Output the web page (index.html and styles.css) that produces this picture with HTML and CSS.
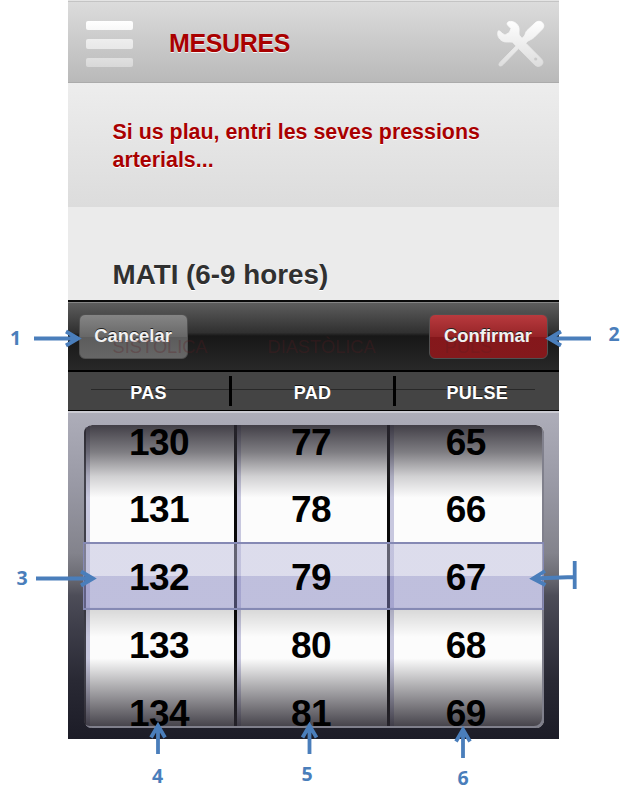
FILE: index.html
```html
<!DOCTYPE html>
<html lang="ca">
<head>
<meta charset="utf-8">
<title>Mesures</title>
<link rel="stylesheet" href="styles.css">
</head>
<body>
<main class="phone">
  <header class="topbar">
    <div class="menu"><span class="bar bar-a"></span><span class="bar bar-b"></span><span class="bar bar-c"></span></div>
    <h1 class="title">MESURES</h1>
    <svg class="tools" width="48" height="48" viewBox="0 0 48 48">
      <defs><linearGradient id="metal" x1="0" y1="0" x2="0" y2="48" gradientUnits="userSpaceOnUse"><stop offset="0" stop-color="#fff"/><stop offset="1" stop-color="#dcdcdc"/></linearGradient></defs>
      <path fill="url(#metal)" stroke="url(#metal)" stroke-width=".8" stroke-linejoin="round" d="M38 3 C40 .8 43.500 .8 45.500 2.800 C47.300 4.600 47.300 7 45.500 9 L37 17.500 C35 19.500 32 20 30.200 21.800 L28.800 23.200 L44 38.500 C46.500 41 46.400 43.500 44.500 45.300 C42.500 47 39.500 46.800 37.500 44.700 L21.600 28.600 L6.200 44.500 C4.800 46 3 46.500 2.300 45.700 C1.500 45 2 43.300 3.300 42 L19 25.900 L15.500 22.200 C12 21.700 8.500 22.800 5.200 21 C1.300 18.800 -.2 14.500 1.200 11 C2.300 10.300 3.500 11.500 5 13.200 L8 15 L12.300 12.500 L14 8.600 L11 5.500 C9.500 4 10 2.500 12 1.600 C16.500 .6 20.500 3.500 21.800 7.200 C22.500 9.500 21.700 12.500 22.200 15 L25 18.300 L27.300 16 C28.500 14 28.500 12 30 10.500 Z"/>
      <circle cx="38.700" cy="39" r="1.600" fill="#c9c9c9"/>
    </svg>
  </header>
  <section class="intro"><p class="intro-text">Si us plau, entri les seves pressions arterials...</p></section>
  <section class="period"><h2 class="period-title">MATI (6-9 hores)</h2></section>
  <div class="actions">
    <div class="ghosts"><span class="ghost">SISTÒLICA</span><span class="ghost">DIASTÒLICA</span><span class="ghost">PULS</span></div>
    <button class="btn cancel">Cancelar</button>
    <button class="btn confirm">Confirmar</button>
  </div>
  <div class="heads">
    <span class="head">PAS</span><span class="head">PAD</span><span class="head">PULSE</span>
  </div>
  <div class="picker">
    <div class="wheels">
      <div class="wheel"><span>130</span><span>131</span><span>132</span><span>133</span><span>134</span></div>
      <div class="wheel"><span>77</span><span>78</span><span>79</span><span>80</span><span>81</span></div>
      <div class="wheel"><span>65</span><span>66</span><span>67</span><span>68</span><span>69</span></div>
      <div class="shade"></div>
    </div>
    <div class="selection"></div>
  </div>
</main>
<svg class="notes" width="632" height="798" viewBox="0 0 632 798">
  <g class="arrow">
    <path d="M34 338.500H78M66 331.500L78 338.500L66 345.500"/>
    <path d="M591 338.500H549M561 331.500L549 338.500L561 345.500"/>
    <path d="M36 578.500H93M81 571.500L93 578.500L81 585.500"/>
    <path d="M574.500 577L533 578.500M545 571L533 578.500L545.500 585M574.700 561V589"/>
    <path d="M158 754V726M151 737.500L158 725.500L165 737.500"/>
    <path d="M309.500 754V726M302.500 737.500L309.500 725.500L316.500 737.500"/>
    <path d="M463 758V730M456 741.500L463 729.500L470 741.500"/>
  </g>
  <g class="num">
    <text x="15.500" y="345">1</text>
    <text x="614" y="341">2</text>
    <text x="22" y="584.500">3</text>
    <text x="157.500" y="783">4</text>
    <text x="307" y="780.500">5</text>
    <text x="463" y="784.500">6</text>
  </g>
</svg>
</body>
</html>
```
FILE: styles.css
```css
* { box-sizing: border-box; }
body {
  margin: 0;
  width: 632px;
  height: 798px;
  background: #fff;
  font-family: "Liberation Sans", Arial, sans-serif;
  font-weight: bold;
  overflow: hidden;
}
h1, h2, p { margin: 0; }
.phone { width: 490.5px; height: 739px; margin-left: 68px; }

.topbar {
  height: 83px;
  display: flex;
  align-items: flex-start;
  padding: 19px 14px 0 18px;
  background: linear-gradient(#dcdcdc, #b9b9b9);
  border-top: 1px solid #e4e4e4;
  border-bottom: 1px solid #ababab;
  box-shadow: inset 0 1px #c4c4c4;
}
.menu { width: 47px; display: grid; gap: 9px; margin-top: .5px; }
.bar { height: 9.5px; border-radius: 2px; }
.bar-a { background: linear-gradient(#fff, #f8f8f8); }
.bar-b { background: linear-gradient(#eee, #e8e8e8); }
.bar-c { background: linear-gradient(#e0e0e0, #d8d8d8); }
.title {
  flex: 1;
  margin: 7px 0 0 36px;
  font-size: 25px;
  line-height: 32px;
  letter-spacing: -.35px;
  color: #a90000;
  text-shadow: 0 1px #f4f4f4;
}
.tools { flex: none; margin: 0; }

.intro { height: 124px; padding: 35px 40px 0 44.5px; background: linear-gradient(#ededed, #dcdcdc); }
.intro-text {
  font-size: 21.4px;
  line-height: 28px;
  color: #a90000;
  text-shadow: 0 1px #fff;
}
.period { height: 93px; padding: 50px 40px 0 44.5px; background: #ebebeb; }
.period-title { font-size: 27.8px; line-height: 36px; color: #303030; text-shadow: 0 1px #fff; }

.actions {
  position: relative;
  height: 72px;
  display: flex;
  justify-content: space-between;
  padding: 12px 11px 0 10.5px;
  background: linear-gradient(#5e5e5e, #303030 45%, #171717 50%, #282828);
  border-top: 2px solid #0a0a0a;
  border-bottom: 2px solid #000;
  box-shadow: inset 0 1px #858585;
}
.ghosts {
  position: absolute;
  inset: 34px 66px auto 44.5px;
  z-index: 1;
  display: grid;
  grid-template-columns: 155px 177px 1fr;
  font-size: 18.2px;
  font-weight: normal;
  line-height: 22px;
  color: rgba(90, 28, 34, .3);
}
.btn {
  height: 45px;
  padding: 0 0 1px;
  border: 1px solid #505050;
  border-radius: 6px;
  font: bold 18.4px/24px "Liberation Sans", Arial, sans-serif;
  color: #f2f2f2;
  text-shadow: 0 -1px #222;
}
.cancel { width: 109px; background: linear-gradient(#858585, #686868 50%, #5c5c5c 51%, #666); }
.confirm { width: 119px; background: linear-gradient(#b83a3e, #962427 50%, #85171b 51%, #84191c); }

.heads {
  height: 39px;
  display: grid;
  grid-template-columns: 164px 164px 1fr;
  align-items: center;
  text-align: center;
  background: linear-gradient(#282828, #282828) 23px 17px / 444px 1px no-repeat, #444;
  border-bottom: 1px solid #000;
}
.head {
  height: 30px;
  padding: 1px 0 0;
  font-size: 18px;
  line-height: 32px;
  letter-spacing: .3px;
  color: #fff;
  text-shadow: 0 -1px #181818;
  border-right: 3px solid #000;
}
.head:last-child { border-right: 0; }

.picker {
  position: relative;
  height: 328px;
  padding: 12px 15px 10px 16px;
  background: linear-gradient(#adadb9, #9999a5 22%, #83838c 43%, #6c6c74 50%, #4d4d58 56%, #3f3f4b 65%, #292934 82%, #1c1c27);
  border-top: 2px solid #cbcbd3;
}
.wheels {
  position: relative;
  height: 303px;
  display: grid;
  grid-template-columns: 150px 153px 1fr;
  grid-template-rows: 303px;
  overflow: hidden;
  border-radius: 8px;
}
.wheel {
  height: 303px;
  padding: 3px 2px 0 0;
  border-left: 3px solid #090909;
  background: linear-gradient(90deg, #c8c8df 4px, #fcfcfc 4px);
  display: grid;
  grid-template-rows: repeat(5, 67.8px);
  align-content: center;
  justify-items: center;
  line-height: 67.8px;
  font-size: 37px;
  letter-spacing: -.6px;
  color: #000;
}
.wheel:first-child { padding-right: 2px; border-left: 2px solid #40404a; }
.wheel span { position: relative; z-index: 2; }
.shade {
  position: absolute;
  inset: 0;
  border-radius: 8px;
  box-shadow: inset -2px -2px #80808c;
  background: linear-gradient(rgba(40,37,46,.88), rgba(50,48,56,.62) 9%, rgba(80,78,86,.25) 17%, transparent 24%, transparent 60%, rgba(0,0,0,.14) 61%, transparent 70%, transparent 77%, rgba(60,58,65,.35) 85%, rgba(40,37,46,.88));
}
.selection {
  position: absolute;
  top: 129px;
  left: 15px;
  right: 15px;
  height: 68px;
  background: linear-gradient(rgba(189,189,220,.5) 50%, rgba(130,130,190,.5) 50%);
  border: solid #8589b4;
  border-width: 2px 1px;
}

.notes { position: absolute; z-index: 3; top: 0; left: 0; pointer-events: none; }
.arrow { fill: none; stroke: #4a7ebb; stroke-width: 3.8; stroke-linecap: butt; }
.num { fill: #4a7ebb; font: bold 19.5px "Open Sans", sans-serif; text-anchor: middle; }
```
